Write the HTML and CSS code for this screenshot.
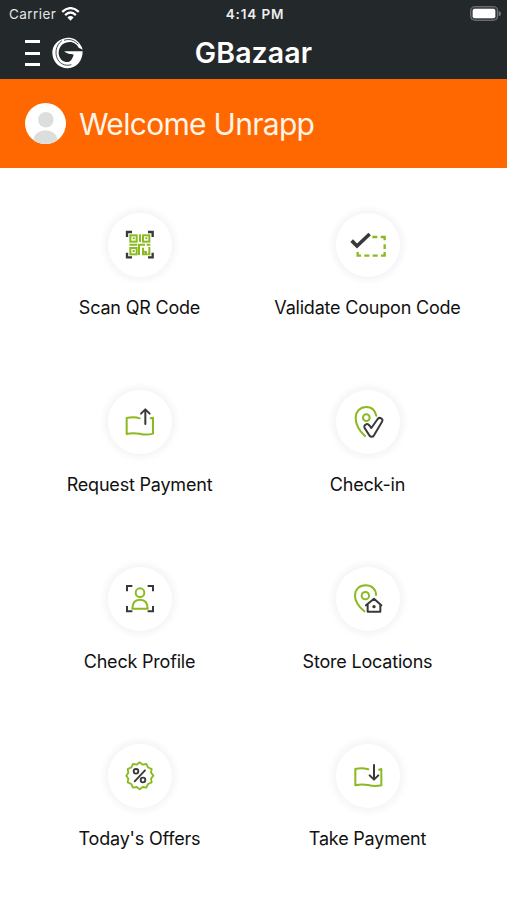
FILE: index.html
```html
<!DOCTYPE html>
<html lang="en">
<head>
<meta charset="utf-8">
<title>GBazaar</title>
<link rel="stylesheet" href="styles.css">
</head>
<body>
<header class="top">
  <div class="status">
    <div class="carrier"><span>Carrier</span>
      <svg class="wifi" viewBox="0 0 57 43" fill="none" stroke="#fff" stroke-width="7"><path d="M3 15Q28.500-8 54 15M12 25Q28.500 9 45 25"/><path d="M19 32Q28.500 24 38 32L28.500 42Z" fill="#fff" stroke="none"/></svg>
    </div>
    <div class="time">4:14 PM</div>
    <svg class="battery" viewBox="0 0 93 45"><rect x="2" y="2" width="81" height="41" rx="12" fill="#3b3e40" stroke="#77797b" stroke-width="3"/><rect x="8" y="8" width="68" height="29" rx="6" fill="#fff"/><path d="M86 15q7 2 7 8t-7 8z" fill="#77797b"/></svg>
  </div>
  <div class="nav">
    <div class="nav-left">
      <div class="menu"><i></i><i></i><i></i></div>
      <svg class="logo" viewBox="12 11 93 96"><path fill="#fff" d="M98 36C88 18 71 11 54 14C28 18 12 38 13 60C14 86 34 106 60 105C86 104 104 82 104 54H49C56 62 67 62 77 64C73 79 65 88 54 86C39 83 31 70 32 56C34 37 48 26 65 26C78 26 87 34 92 43L104 49Q103 42 98 36Z"/><path fill="none" stroke="#23282b" stroke-width="2.500" d="M42 22C22 35 18 66 33 84C43 95 56 98 70 94M48 21C65 15 80 21 91 33"/></svg>
    </div>
    <h1>GBazaar</h1>
  </div>
</header>
<section class="welcome">
  <svg class="avatar" viewBox="0 0 122 122"><defs><clipPath id="face"><circle cx="61" cy="61" r="61"/></clipPath></defs><circle cx="61" cy="61" r="61" fill="#fff"/><g fill="#dcdddd" clip-path="url(#face)"><circle cx="62" cy="50" r="23"/><ellipse cx="61" cy="108" rx="35" ry="27"/></g></svg>
  <span class="hello">Welcome Unrapp</span>
</section>
<main class="grid">
  <div class="tile"><div class="disc"><svg viewBox="72 72 96 96" fill="none" stroke="#8aba20" stroke-width="6"><path stroke="#393939" stroke-width="7" d="M81 96V81H96M144 81H158V96M158 143V157H144M96 157H81V143"/><rect x="91" y="91" width="19" height="19"/><rect x="129" y="91" width="19" height="19"/><rect x="91" y="129" width="19" height="19"/><path d="M98 100h6M136 100h6M98 138h6M120 88v23M88 119h24M117 150v-31h18M140 119h11M129 128v20h9v-10M148 126v22h-6M126 140h10"/></svg></div><span>Scan QR Code</span></div>
  <div class="tile"><div class="disc"><svg viewBox="66 72 108 96" class="wide" fill="none" stroke="#8aba20" stroke-width="7"><path d="M133 96H148M158 96H170V106M170 118V132M170 141V152H159M149 152H134M124 152H109M99 152H89V141"/><path stroke="#393939" stroke-width="11" d="M71 107L87 123L125 87"/></svg></div><span>Validate Coupon Code</span></div>
  <div class="tile"><div class="disc"><svg viewBox="72 72 96 96" fill="none" stroke="#8aba20" stroke-width="6" stroke-linecap="round" stroke-linejoin="round"><path d="M119 109C105 104 94 105 80 108V156C94 152 106 153 119 155C134 159 146 159 159 155V107L152 109"/><path stroke="#393939" d="M136 126V83M123 95L136 82L149 95"/></svg></div><span>Request Payment</span></div>
  <div class="tile"><div class="disc"><svg viewBox="72 72 96 96" fill="none" stroke="#8aba20" stroke-width="6" stroke-linecap="round" stroke-linejoin="round"><path d="M145 101C141 84 130 75 115 75C96 75 83 89 83 107C83 127 97 149 111 162"/><circle cx="115" cy="107" r="10"/><path stroke="#393939" d="M113 128C118 123 123 127 130 138L149 111C155 104 167 110 162 119L138 160C134 166 128 166 124 160L110 138C108 134 109 130 113 128Z"/></svg></div><span>Check-in</span></div>
  <div class="tile"><div class="disc"><svg viewBox="72 72 96 96" fill="none" stroke="#8aba20" stroke-width="6" stroke-linejoin="round"><path stroke="#393939" stroke-linejoin="miter" d="M81 97V81H97M143 81H159V97M159 141V157H143M97 157H81V141"/><circle cx="120" cy="101" r="13"/><path d="M97 149C97 131 105 122 120 122S143 131 143 149Z"/></svg></div><span>Check Profile</span></div>
  <div class="tile"><div class="disc"><svg viewBox="72 72 96 96" fill="none" stroke="#8aba20" stroke-width="6" stroke-linecap="round" stroke-linejoin="round"><path d="M144 108C144 90 131 79 113 79C94 79 81 91 81 110C81 129 95 145 109 157"/><circle cx="112" cy="110" r="11"/><path stroke="#393939" d="M114 139L138 119L160 139M119 136V158H157V136"/><circle cx="138" cy="143" r="5" fill="#393939" stroke="none"/></svg></div><span>Store Locations</span></div>
  <div class="tile"><div class="disc"><svg viewBox="72 72 96 96" fill="none" stroke="#8aba20" stroke-width="5.500" stroke-linecap="round" stroke-linejoin="round"><path d="M119 79L128 86L139 84L144 94L155 99L153 110L160 119L153 128L155 139L144 144L139 155L128 153L119 160L110 153L99 155L94 144L83 139L85 128L79 119L85 110L83 99L94 94L99 84L110 86Z"/><g stroke="#393939"><path d="M135 103L104 136"/><circle cx="108" cy="106" r="7"/><circle cx="129" cy="132" r="7"/></g></svg></div><span>Today's Offers</span></div>
  <div class="tile"><div class="disc"><svg viewBox="72 72 96 96" fill="none" stroke="#8aba20" stroke-width="6" stroke-linecap="round" stroke-linejoin="round"><path d="M121 100C106 96 95 96 82 99V148C95 145 107 145 120 147C135 151 147 151 160 148V99L153 101"/><path stroke="#393939" d="M138 87V130M125 118L138 131L151 118"/></svg></div><span>Take Payment</span></div>
</main>
</body>
</html>
```
FILE: styles.css
```css
* { box-sizing: border-box; }
body { margin: 0; background: #fff; color: #111; font-family: Inter, "Liberation Sans", sans-serif; overflow: hidden; }
.top { height: 79px; background: #23282b; color: #fff; }
.status { height: 27px; display: grid; grid-template-columns: 1fr auto 1fr; align-items: center; padding: 0 6px 0 9px; }
.carrier { display: flex; align-items: center; gap: 5px; font-size: 13.5px; letter-spacing: .45px; color: #e4e5e5; }
.wifi { width: 19px; height: 14px; }
.time { font-size: 13.5px; font-weight: 600; letter-spacing: .85px; color: #eee; }
.battery { width: 31px; height: 15px; justify-self: end; }
.nav { height: 52px; display: grid; grid-template-columns: 1fr auto 1fr; align-items: center; padding: 0 25px; }
.nav-left { display: flex; align-items: center; gap: 12px; }
.menu { width: 15px; height: 26px; display: flex; flex-direction: column; justify-content: space-between; }
.menu i { height: 3px; background: #fff; }
.logo { width: 31px; height: 32px; }
h1 { margin: 0; font-size: 28.5px; font-weight: 600; line-height: 34px; letter-spacing: .1px; }
.welcome { height: 89px; padding: 0 25px; background: #ff6700; display: flex; align-items: center; gap: 13px; color: #fff5e8; }
.avatar { width: 41px; height: 41px; }
.hello { font-size: 30px; line-height: 40px; letter-spacing: -.7px; white-space: nowrap; }
.grid { display: grid; grid-template-columns: 228px 228px; grid-auto-rows: 177px; justify-content: center; padding-top: 45px; }
.tile { display: flex; flex-direction: column; align-items: center; }
.disc { width: 64px; height: 64px; border-radius: 50%; display: flex; align-items: center; justify-content: center; box-shadow: 0 0 6px 4px #f5f5f5; }
.disc svg { width: 32px; height: 32px; }
.disc .wide { width: 36px; }
.tile span { margin-top: 18px; font-size: 18px; line-height: 26px; letter-spacing: -.2px; white-space: nowrap; }
```
